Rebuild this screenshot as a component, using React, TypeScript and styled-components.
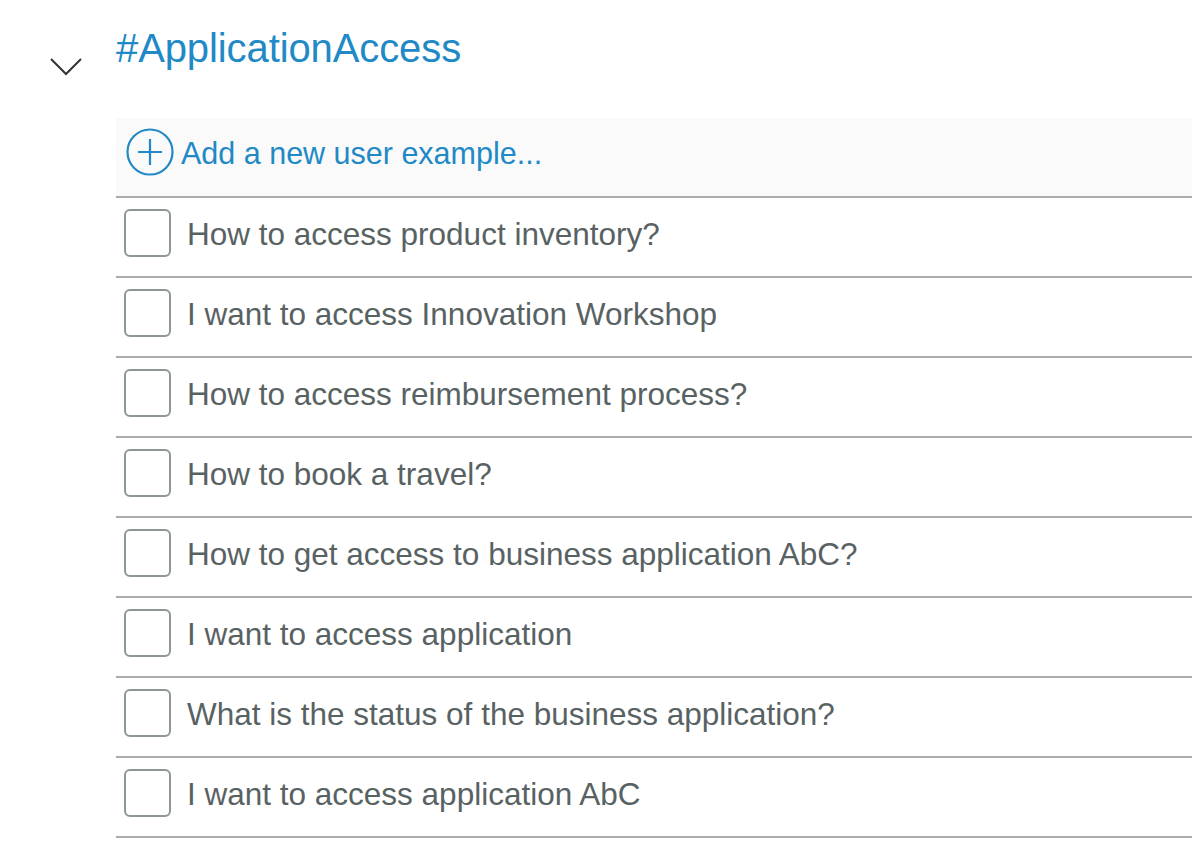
import * as React from 'react';
import styled, { createGlobalStyle } from 'styled-components';

const colors = {
  blue: '#2089c6',
  text: '#586263',
  checkbox: '#8d9797',
  rule: '#a9aeac',
  barBg: '#fafafa',
};

const examples = [
  'How to access product inventory?',
  'I want to access Innovation Workshop',
  'How to access reimbursement process?',
  'How to book a travel?',
  'How to get access to business application AbC?',
  'I want to access application',
  'What is the status of the business application?',
  'I want to access application AbC',
];

const GlobalStyle = createGlobalStyle`
  html, body {
    margin: 0;
    padding: 0;
    background: #ffffff;
    overflow: hidden;
  }
  body {
    font-family: "Liberation Sans", Arial, Helvetica, sans-serif;
  }
`;

const Page = styled.div`
  display: flex;
  width: 1192px;
  height: 868px;
  overflow: hidden;
`;

const Gutter = styled.div`
  width: 116px;
  flex-shrink: 0;
  display: flex;
  justify-content: flex-start;
  padding: 57px 0 0 49px;
  box-sizing: border-box;
`;

const Toggle = styled.button`
  width: 34px;
  height: 20px;
  padding: 0;
  border: 0;
  background: none;
  color: #333333;
  cursor: pointer;
`;

const Section = styled.section`
  flex: 1;
  min-width: 0;
  display: flex;
  flex-direction: column;
`;

const Title = styled.h2`
  margin: 28px 0 50px;
  font-size: 40px;
  line-height: 40px;
  font-weight: 400;
  color: ${colors.blue};
  letter-spacing: -0.1px;
`;

const AddBar = styled.div`
  display: flex;
  align-items: center;
  gap: 7px;
  height: 80px;
  padding: 0 0 10px 10px;
  box-sizing: border-box;
  background: ${colors.barBg};
  border-bottom: 2px solid ${colors.rule};
  color: ${colors.blue};
  cursor: pointer;
`;

const AddLabel = styled.span`
  font-size: 30.5px;
  line-height: 1;
  margin-top: 2px;
`;

const Row = styled.label`
  display: flex;
  align-items: center;
  gap: 16px;
  height: 80px;
  padding: 0 0 8px 8px;
  box-sizing: border-box;
  border-bottom: 2px solid ${colors.rule};
  cursor: pointer;
`;

const Box = styled.span`
  width: 47px;
  height: 48px;
  flex-shrink: 0;
  box-sizing: border-box;
  border: 2px solid ${colors.checkbox};
  border-radius: 6px;
  background: #ffffff;
`;

const RowText = styled.span`
  font-size: 31.5px;
  line-height: 1;
  color: ${colors.text};
  white-space: nowrap;
  margin-top: 4px;
`;

const Chevron = () => (
  <svg width="34" height="20" viewBox="0 0 34 20" fill="none">
    <path d="M2 2 L17 17 L32 2" stroke="currentColor" strokeWidth="2" />
  </svg>
);

const PlusCircle = () => (
  <svg width="48" height="48" viewBox="0 0 48 48" fill="none">
    <circle cx="24" cy="24" r="22.5" stroke="currentColor" strokeWidth="2.2" />
    <path d="M12 24 H36 M24 11 V37" stroke="currentColor" strokeWidth="2.2" />
  </svg>
);

export default function App() {
  return (
    <>
      <GlobalStyle />
      <Page>
        <Gutter>
          <Toggle aria-label="Collapse">
            <Chevron />
          </Toggle>
        </Gutter>
        <Section>
          <Title>#ApplicationAccess</Title>
          <AddBar>
            <PlusCircle />
            <AddLabel>Add a new user example...</AddLabel>
          </AddBar>
          {examples.map(text => (
            <Row key={text}>
              <Box />
              <RowText>{text}</RowText>
            </Row>
          ))}
        </Section>
      </Page>
    </>
  );
}
